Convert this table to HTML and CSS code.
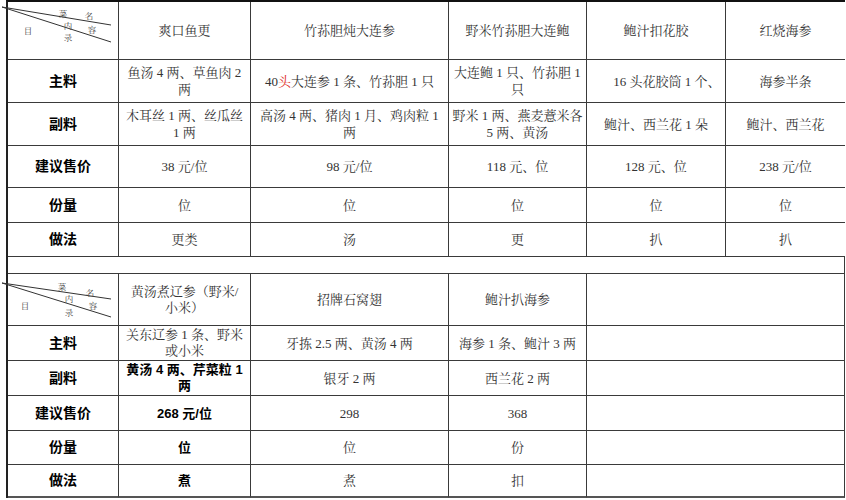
FILE: index.html
```html
<!DOCTYPE html>
<html lang="zh">
<head>
<meta charset="utf-8">
<title>菜单</title>
<link rel="stylesheet" href="styles.css">
</head>
<body>
<div class="sheet">
  <!-- table 1 -->
  <div class="cell diag">
    <svg class="diag-svg" width="120" height="62" viewBox="0 0 120 62">
      <line x1="2" y1="7" x2="111" y2="25"/>
      <line x1="2" y1="7" x2="111" y2="42"/>
      <text x="63" y="13">菜</text>
      <text x="89" y="15">名</text>
      <text x="68" y="25">内</text>
      <text x="92" y="29">容</text>
      <text x="28" y="30">目</text>
      <text x="68" y="37">录</text>
    </svg>
  </div>
  <div class="cell">爽口鱼更</div>
  <div class="cell">竹荪胆炖大连参</div>
  <div class="cell">野米竹荪胆大连鲍</div>
  <div class="cell">鲍汁扣花胶</div>
  <div class="cell open">红烧海参</div>

  <div class="cell label">主料</div>
  <div class="cell">鱼汤 4 两、草鱼肉 2<br>两</div>
  <div class="cell">40 <span class="red">头</span>大连参 1 条、竹荪胆 1 只</div>
  <div class="cell">大连鲍 1 只、竹荪胆 1<br>只</div>
  <div class="cell shift">16 头花胶筒 1 个、</div>
  <div class="cell open">海参半条</div>

  <div class="cell label">副料</div>
  <div class="cell">木耳丝 1 两、丝瓜丝<br>1 两</div>
  <div class="cell">高汤 4 两、猪肉 1 月、鸡肉粒 1<br>两</div>
  <div class="cell">野米 1 两、燕麦薏米各<br>5 两、黄汤</div>
  <div class="cell">鲍汁、西兰花 1 朵</div>
  <div class="cell open">鲍汁、西兰花</div>

  <div class="cell label">建议售价</div>
  <div class="cell">38 元/位</div>
  <div class="cell">98 元/位</div>
  <div class="cell">118 元、位</div>
  <div class="cell">128 元、位</div>
  <div class="cell open">238 元/位</div>

  <div class="cell label">份量</div>
  <div class="cell">位</div>
  <div class="cell">位</div>
  <div class="cell">位</div>
  <div class="cell">位</div>
  <div class="cell open">位</div>

  <div class="cell label">做法</div>
  <div class="cell">更类</div>
  <div class="cell">汤</div>
  <div class="cell">更</div>
  <div class="cell">扒</div>
  <div class="cell open">扒</div>

  <!-- gap -->
  <div class="cell gap"></div>

  <!-- table 2 -->
  <div class="cell diag">
    <svg class="diag-svg" width="120" height="62" viewBox="0 0 120 62">
      <line x1="2" y1="11" x2="111" y2="27"/>
      <line x1="2" y1="11" x2="111" y2="45"/>
      <text x="62" y="14">菜</text>
      <text x="90" y="20">名</text>
      <text x="69" y="26">内</text>
      <text x="93" y="33">容</text>
      <text x="25" y="33">目</text>
      <text x="69" y="40">录</text>
    </svg>
  </div>
  <div class="cell tight">黄汤煮辽参（野米/<br>小米）</div>
  <div class="cell">招牌石窝翅</div>
  <div class="cell">鲍汁扒海参</div>
  <div class="cell wide"></div>

  <div class="cell label">主料</div>
  <div class="cell tight">关东辽参 1 条、野米<br>或小米</div>
  <div class="cell">牙拣 2.5 两、黄汤 4 两</div>
  <div class="cell">海参 1 条、鲍汁 3 两</div>
  <div class="cell wide"></div>

  <div class="cell label">副料</div>
  <div class="cell strong tight">黄汤 4 两、芹菜粒 1<br>两</div>
  <div class="cell">银牙 2 两</div>
  <div class="cell">西兰花 2 两</div>
  <div class="cell wide"></div>

  <div class="cell label">建议售价</div>
  <div class="cell strong">268 元/位</div>
  <div class="cell">298</div>
  <div class="cell">368</div>
  <div class="cell wide"></div>

  <div class="cell label">份量</div>
  <div class="cell strong">位</div>
  <div class="cell">位</div>
  <div class="cell">份</div>
  <div class="cell wide"></div>

  <div class="cell label last">做法</div>
  <div class="cell strong last">煮</div>
  <div class="cell last">煮</div>
  <div class="cell last">扣</div>
  <div class="cell wide last"></div>
</div>
</body>
</html>
```
FILE: styles.css
```css
html, body {
  margin: 0;
  padding: 0;
  background: #fff;
  overflow: hidden;
}

body {
  width: 846px;
  height: 500px;
}

.sheet {
  margin-left: 6px;
  display: grid;
  grid-template-columns: 111px 132px 198px 138px 139px 119px;
  grid-template-rows: 58px 43px 43px 42px 35px 34px 17px 52px 35px 35px 35px 34px 33px;
  width: max-content;
  border-left: 2px solid #222;
  border-top: 2px solid #111;
  font-family: "Liberation Serif", "Noto Serif CJK SC", "Noto Sans CJK SC", serif;
  font-size: 13px;
  line-height: 17px;
  color: #333;
}

.cell {
  box-sizing: border-box;
  border-right: 1px solid #3a3a3a;
  border-bottom: 1px solid #3a3a3a;
  display: flex;
  align-items: center;
  justify-content: center;
  text-align: center;
  padding: 0 2px;
  position: relative;
}

.cell.open {
  border-right: none;
}

.cell.gap {
  grid-column: 1 / -1;
}

.cell.wide {
  grid-column: span 2;
}

.cell.last {
  border-bottom: 2px solid #555;
}

.cell.tight {
  line-height: 16px;
}

.cell.shift {
  padding-left: 24px;
}

.label {
  font-family: "Liberation Sans", "Noto Sans CJK SC", sans-serif;
  font-weight: bold;
  font-size: 14px;
  color: #000;
}

.strong {
  font-family: "Liberation Sans", "Noto Sans CJK SC", sans-serif;
  font-weight: bold;
  color: #000;
}

.red {
  color: #e0322d;
}

.diag {
  overflow: visible;
}

.diag-svg {
  position: absolute;
  left: -8px;
  top: -2px;
  overflow: visible;
}

.diag-svg line {
  stroke: #333;
  stroke-width: 1;
}

.diag-svg text {
  font-family: "Noto Serif CJK SC", "Noto Sans CJK SC", serif;
  font-size: 8.5px;
  fill: #444;
  text-anchor: middle;
  dominant-baseline: central;
}
```
